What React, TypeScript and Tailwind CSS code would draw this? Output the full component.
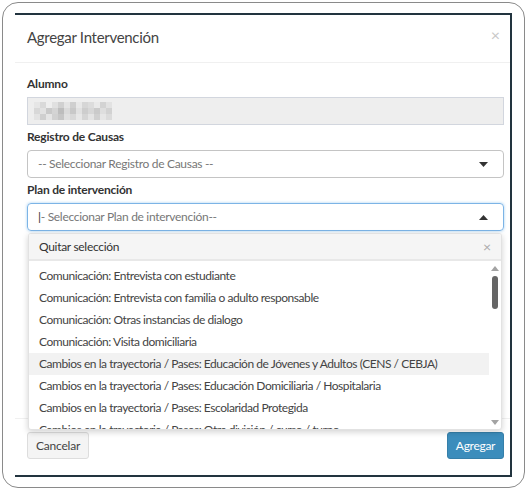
import { FunctionComponent } from 'react';

const options = [
  'Comunicación: Entrevista con estudiante',
  'Comunicación: Entrevista con familia o adulto responsable',
  'Comunicación: Otras instancias de dialogo',
  'Comunicación: Visita domiciliaria',
  'Cambios en la trayectoria / Pases: Educación de Jóvenes y Adultos (CENS / CEBJA)',
  'Cambios en la trayectoria / Pases: Educación Domiciliaria / Hospitalaria',
  'Cambios en la trayectoria / Pases: Escolaridad Protegida',
  'Cambios en la trayectoria / Pases: Otra división / curso / turno',
];

// blurred name in the "Alumno" field
const pixels = [
  ['#e6e6e6', '#d9d9d9', '#eeeeee', '#e0e0e0', '#d0d0d0', '#e4e4e4', '#cfcfcf', '#e8e8e8', '#d6d6d6', '#dcdcdc', '#e9e9e9', '#d3d3d3', '#e2e2e2'],
  ['#d8d8d8', '#e2e2e2', '#c9c9c9', '#d4d4d4', '#bdbdbd', '#dadada', '#c8c8c8', '#e1e1e1', '#cdcdcd', '#d7d7d7', '#cacaca', '#dedede', '#d2d2d2'],
  ['#e3e3e3', '#cfcfcf', '#e5e5e5', '#d1d1d1', '#c6c6c6', '#e0e0e0', '#d8d8d8', '#e7e7e7', '#d5d5d5', '#e4e4e4', '#d0d0d0', '#e6e6e6', '#dbdbdb'],
];

const Caret = ({ up }: { up?: boolean }) => (
  <svg width="9" height="5" viewBox="0 0 9 5" className="text-[#333]">
    {up ? <path d="M0 5 L4.5 0 L9 5 Z" fill="currentColor" /> : <path d="M0 0 L9 0 L4.5 5 Z" fill="currentColor" />}
  </svg>
);

const Label: FunctionComponent<{ text: string }> = ({ text }) => (
  <div className="text-[12px] font-bold text-[#333] leading-[18px] mb-[4px] tracking-[-0.2px]">{text}</div>
);

const App = (): JSX.Element => {
  return (
    <div
      className="w-[527px] h-[490px] bg-white p-[2px]"
      style={{ fontFamily: 'Lato, "Liberation Sans", sans-serif' }}
    >
      <div className="w-full h-full rounded-[16px] border border-[#8a8a8a] pt-[10px] px-[12px] pb-[10px]">
        <div className="relative h-full border-t-2 border-r-2 border-b-2 border-[#22343f] bg-white flex flex-col">
          {/* header */}
          <div className="h-[48px] flex items-center justify-between pl-[12px] pr-[10px] border-b border-[#f0f0f0]">
            <span className="text-[15px] text-[#444] tracking-[-0.3px] -mt-[2px]">Agregar Intervención</span>
            <span className="text-[16px] text-[#c8c8c8] -mt-[8px]">×</span>
          </div>

          {/* body */}
          <div className="flex-1 px-[12px] pr-[6px] pt-[12px]">
            <Label text="Alumno" />
            <div className="h-[28px] bg-[#eeeeee] border border-[#d2d6de] flex items-center px-[6px]">
              <div className="flex flex-col">
                {pixels.map((row, i) => (
                  <div key={i} className="flex">
                    {row.map((c, j) => (
                      <div key={j} className="w-[6px] h-[6px]" style={{ background: c }} />
                    ))}
                  </div>
                ))}
              </div>
            </div>

            <div className="mt-[3px]">
              <Label text="Registro de Causas" />
              <div className="h-[28px] border border-[#c4c4c4] rounded-[4px] flex items-center justify-between pl-[10px] pr-[15px]">
                <span className="text-[12px] text-[#777] tracking-[-0.3px]">-- Seleccionar Registro de Causas --</span>
                <Caret />
              </div>
            </div>

            <div className="mt-[3px]">
              <Label text="Plan de intervención" />
              <div className="h-[28px] border border-[#7cb4e6] rounded-[4px] shadow-[0_0_3px_rgba(102,175,233,0.6)] flex items-center justify-between pl-[10px] pr-[15px]">
                <span className="text-[12px] text-[#777] tracking-[-0.3px]">
                  <span className="text-[#333]">|</span>- Seleccionar Plan de intervención--
                </span>
                <Caret up />
              </div>
            </div>
          </div>

          {/* footer */}
          <div className="h-[57px] border-t border-[#f0f0f0] flex items-start justify-between px-[12px] pr-[6px] pt-[13px]">
            <button className="h-[27px] w-[62px] bg-[#f4f4f4] border border-[#dddddd] rounded-[3px] text-[12px] text-[#444] tracking-[-0.2px]">
              Cancelar
            </button>
            <button className="h-[27px] w-[57px] bg-[#3c8dbc] border border-[#367fa9] rounded-[3px] text-[12px] text-white tracking-[-0.3px]">
              Agregar
            </button>
          </div>

          {/* open dropdown */}
          <div className="absolute left-[13px] top-[218px] w-[474px] h-[197px] bg-white border border-[#e2e2e2] rounded-[3px] shadow-[0_2px_6px_rgba(0,0,0,0.18)] flex flex-col overflow-hidden">
            <div className="h-[27px] shrink-0 bg-[#f5f5f5] border-b-2 border-[#e8e8e8] flex items-center justify-between pl-[10px] pr-[10px]">
              <span className="text-[12px] text-[#333] tracking-[-0.3px]">Quitar selección</span>
              <span className="text-[14px] text-[#aaa]">×</span>
            </div>
            <div className="flex flex-1 min-h-0">
              <div className="flex-1 pt-[4px] overflow-hidden">
                {options.map((o, i) => (
                  <div
                    key={i}
                    className={`h-[22px] flex items-center pl-[10px] text-[12px] text-[#444] tracking-[-0.45px] whitespace-nowrap ${i === 4 ? 'bg-[#f2f2f2]' : ''}`}
                  >
                    {o}
                  </div>
                ))}
              </div>
              <div className="w-[12px] flex flex-col items-center pt-[5px] pb-[4px]">
                <svg width="8" height="5" viewBox="0 0 8 5">
                  <path d="M0 5 L4 0 L8 5 Z" fill="#a3a3a3" />
                </svg>
                <div className="w-[6px] h-[33px] rounded-[3px] bg-[#666] mt-[5px]" />
                <div className="flex-1" />
                <svg width="8" height="5" viewBox="0 0 8 5">
                  <path d="M0 0 L8 0 L4 5 Z" fill="#a3a3a3" />
                </svg>
              </div>
            </div>
          </div>
        </div>
      </div>
    </div>
  );
};

export default App;
